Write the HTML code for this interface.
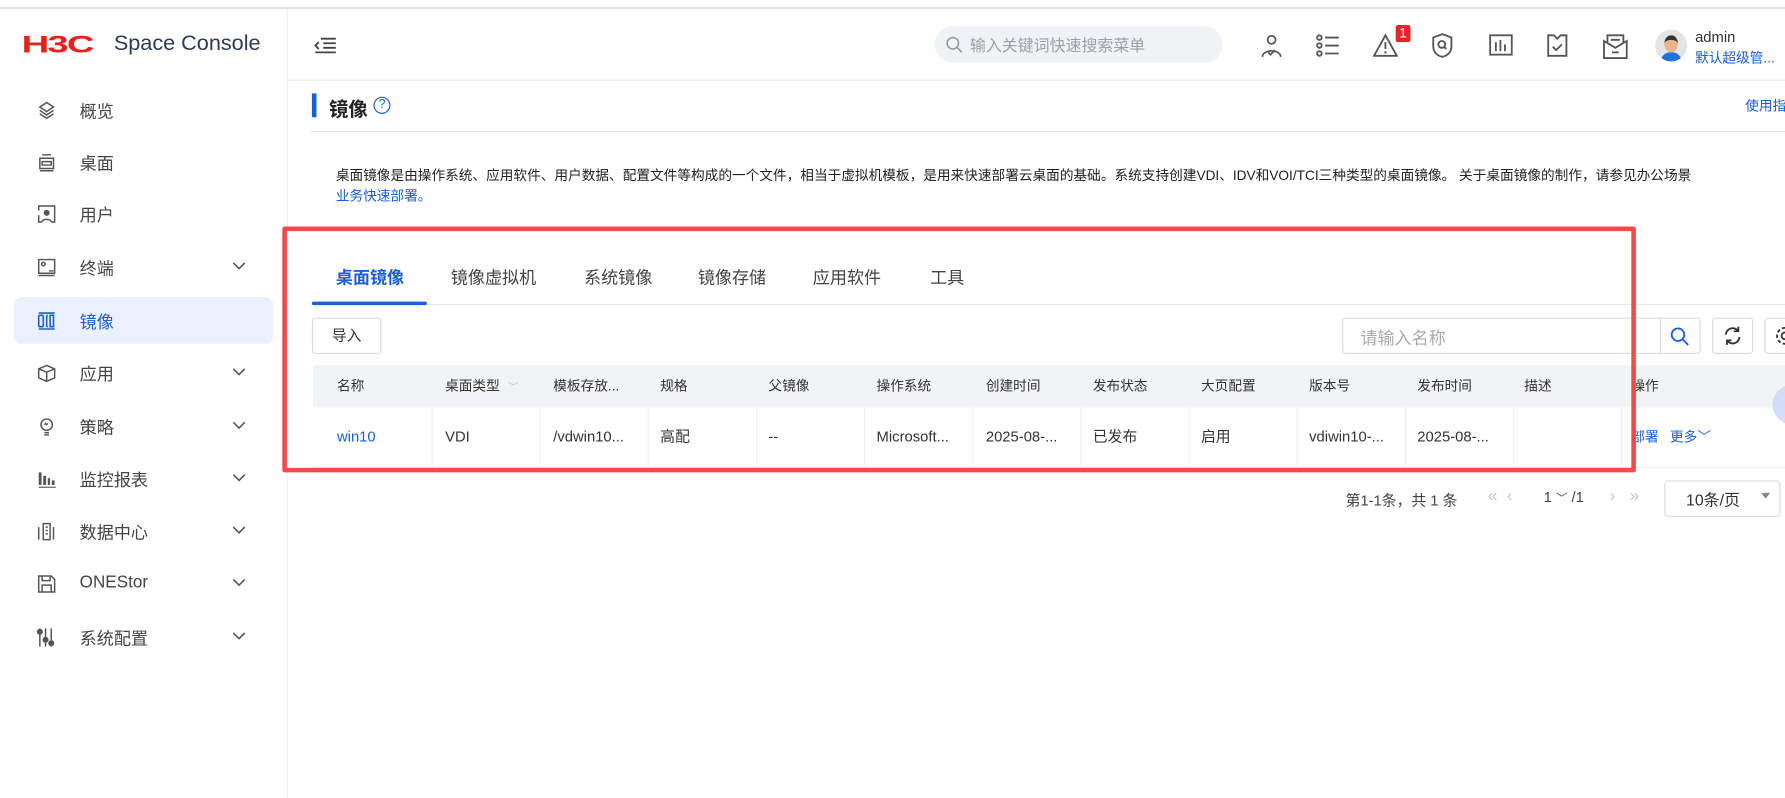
<!DOCTYPE html>
<html><head><meta charset="utf-8">
<style>
*{box-sizing:border-box;margin:0;padding:0}
html,body{width:1785px;height:798px;overflow:hidden;background:#fff}
#w{position:absolute;left:0;top:0;width:1568px;height:701px;transform:scale(1.13839);transform-origin:0 0;font-family:"Liberation Sans","Noto Sans CJK SC",sans-serif;color:#333;font-size:13px}
.a{position:absolute;white-space:nowrap}
.mi{position:absolute;left:0;width:252px;height:42px}
.mi .t{position:absolute;left:70px;top:11px;font-size:15px;color:#444}
.mi svg.ic{position:absolute;left:32px;top:12px}
.mi .ch{position:absolute;left:204px;top:16px}
.th{position:absolute;top:321px;height:37px;line-height:37px;font-size:12px;color:#333}
.td{position:absolute;top:358px;height:52px;line-height:52px;font-size:13px;color:#333;border-right:1px solid #eef0f3}
.hi{position:absolute;top:29px}
</style></head><body><div id="w">
<div class="a" style="left:0;top:6px;width:1568px;height:2px;background:#e6e6e6"></div>
<!-- sidebar -->
<div class="a" style="left:252px;top:8px;width:1px;height:693px;background:#eceef2"></div>
<div class="a" style="left:19px;top:28px;font-size:21px;font-weight:bold;color:#e2231a;letter-spacing:-1px;font-family:'Liberation Sans',sans-serif;transform:scaleX(1.6);transform-origin:0 0">H3C</div>
<div class="a" style="left:100px;top:28px;font-size:19px;color:#2f3a4f">Space Console</div>
<div class="a" style="left:12px;top:261px;width:228px;height:41px;background:#eaf1fd;border-radius:7px"></div>

<div class="mi" style="top:76px"><svg class="ic" width="18" height="18" viewBox="0 0 18 18" fill="none" stroke="#555" stroke-width="1.3"><path d="M9 2l6 4-6 4-6-4z"/><path d="M3 9l6 4 6-4"/><path d="M3 12l6 4 6-4"/></svg><span class="t">概览</span></div>
<div class="mi" style="top:122px"><svg class="ic" width="18" height="18" viewBox="0 0 18 18" fill="none" stroke="#555" stroke-width="1.3"><path d="M5 2h8M3 5h12v9H3zM5 8h8v3H5zM3 16h12"/></svg><span class="t">桌面</span></div>
<div class="mi" style="top:167px"><svg class="ic" width="18" height="18" viewBox="0 0 18 18" fill="none" stroke="#555" stroke-width="1.3"><path d="M2 6V2h14v14h-3M2 10v6h3"/><circle cx="9" cy="8" r="2" fill="#555"/><path d="M5 16c0-3 8-3 8 0"/></svg><span class="t">用户</span></div>
<div class="mi" style="top:214px"><svg class="ic" width="18" height="18" viewBox="0 0 18 18" fill="none" stroke="#555" stroke-width="1.3"><path d="M2 2h14v12H2zM2 16h14"/><circle cx="6" cy="6" r="1.5"/><path d="M11 12h4"/></svg><span class="t">终端</span><svg class="ch" width="12" height="8" viewBox="0 0 12 8"><path d="M1 1l5 5 5-5" fill="none" stroke="#555" stroke-width="1.4"/></svg></div>
<div class="mi" style="top:261px"><svg class="ic" width="18" height="18" viewBox="0 0 18 18" fill="none" stroke="#1a5fd6" stroke-width="1.4"><path d="M2 2h14M2 16h14M2 4v10M6 4v10M2 4h4M2 14h4M9 4v10M12 4h3v10h-3zM9 4h1M9 14h1"/></svg><span class="t" style="color:#1a5fd6">镜像</span></div>
<div class="mi" style="top:307px"><svg class="ic" width="18" height="18" viewBox="0 0 18 18" fill="none" stroke="#555" stroke-width="1.3"><path d="M9 2l7 3v8l-7 3-7-3V5z"/><path d="M2 5l7 3 7-3M9 8v8"/></svg><span class="t">应用</span><svg class="ch" width="12" height="8" viewBox="0 0 12 8"><path d="M1 1l5 5 5-5" fill="none" stroke="#555" stroke-width="1.4"/></svg></div>
<div class="mi" style="top:354px"><svg class="ic" width="18" height="18" viewBox="0 0 18 18" fill="none" stroke="#555" stroke-width="1.3"><circle cx="9" cy="7" r="5"/><path d="M7 7l1-1 1 1 1-1M7 14h4M7 16h4"/></svg><span class="t">策略</span><svg class="ch" width="12" height="8" viewBox="0 0 12 8"><path d="M1 1l5 5 5-5" fill="none" stroke="#555" stroke-width="1.4"/></svg></div>
<div class="mi" style="top:400px"><svg class="ic" width="18" height="18" viewBox="0 0 18 18" fill="#555"><rect x="2" y="3" width="2.5" height="11"/><rect x="6" y="6" width="2.5" height="8"/><rect x="10" y="8" width="2" height="6"/><rect x="13.5" y="10" width="2.5" height="4"/><rect x="2" y="15.5" width="15" height="1"/></svg><span class="t">监控报表</span><svg class="ch" width="12" height="8" viewBox="0 0 12 8"><path d="M1 1l5 5 5-5" fill="none" stroke="#555" stroke-width="1.4"/></svg></div>
<div class="mi" style="top:446px"><svg class="ic" width="18" height="18" viewBox="0 0 18 18" fill="none" stroke="#555" stroke-width="1.3"><path d="M2 5v11M6 2h6v14H6zM15 5v11M8 5h2M8 8h2M8 11h2"/></svg><span class="t">数据中心</span><svg class="ch" width="12" height="8" viewBox="0 0 12 8"><path d="M1 1l5 5 5-5" fill="none" stroke="#555" stroke-width="1.4"/></svg></div>
<div class="mi" style="top:492px"><svg class="ic" width="18" height="18" viewBox="0 0 18 18" fill="none" stroke="#555" stroke-width="1.3"><path d="M2 2h11l3 3v11H2zM5 2v4h7V2M5 16v-6h8v6"/></svg><span class="t">ONEStor</span><svg class="ch" width="12" height="8" viewBox="0 0 12 8"><path d="M1 1l5 5 5-5" fill="none" stroke="#555" stroke-width="1.4"/></svg></div>
<div class="mi" style="top:539px"><svg class="ic" width="18" height="18" viewBox="0 0 18 18" fill="none" stroke="#555" stroke-width="1.3"><path d="M3 1v16M8 1v16M13 1v16"/><circle cx="3" cy="4" r="2" fill="#555"/><circle cx="8" cy="11" r="2" fill="#555"/><circle cx="13" cy="14" r="2" fill="#555"/></svg><span class="t">系统配置</span><svg class="ch" width="12" height="8" viewBox="0 0 12 8"><path d="M1 1l5 5 5-5" fill="none" stroke="#555" stroke-width="1.4"/></svg></div>

<!-- header -->
<div class="a" style="left:253px;top:70px;width:1315px;height:1px;background:#eceef2"></div>
<svg class="a" style="left:276px;top:31px" width="20" height="18" viewBox="0 0 20 18" fill="none" stroke="#444" stroke-width="1.6"><path d="M6 3h13M8 7h11M8 11h11M1 15h18M4 6l-3 3 3 3"/></svg>
<div class="a" style="left:821px;top:23px;width:253px;height:32px;background:#f0f2f5;border-radius:16px"></div>
<svg class="a" style="left:831px;top:32px" width="15" height="15" viewBox="0 0 15 15" fill="none" stroke="#999" stroke-width="1.4"><circle cx="6" cy="6" r="5"/><path d="M10 10l4 4"/></svg>
<div class="a" style="left:852px;top:30px;font-size:14px;color:#9aa0a8">输入关键词快速搜索菜单</div>
<svg class="hi" style="left:1106px" width="22" height="22" viewBox="0 0 22 22" fill="none" stroke="#555" stroke-width="1.5"><circle cx="11" cy="6" r="3.5"/><path d="M3 21c0-7 16-7 16 0"/><path d="M8 17l2 2 4-4"/></svg>
<svg class="hi" style="left:1156px" width="22" height="22" viewBox="0 0 22 22" fill="none" stroke="#555" stroke-width="1.6"><circle cx="3" cy="4" r="2"/><circle cx="3" cy="11" r="2"/><circle cx="3" cy="18" r="2"/><path d="M8 4h12M8 11h12M8 18h12"/></svg>
<svg class="hi" style="left:1206px" width="22" height="22" viewBox="0 0 22 22" fill="none" stroke="#555" stroke-width="1.6"><path d="M11 2L1 20h20z"/><path d="M11 8v6M11 16v2"/></svg>
<div class="a" style="left:1226px;top:22px;width:13px;height:15px;background:#e8232b;color:#fff;font-size:12px;line-height:15px;text-align:center;border-radius:2px">1</div>
<svg class="hi" style="left:1257px" width="20" height="22" viewBox="0 0 20 22" fill="none" stroke="#555" stroke-width="1.6"><path d="M10 1l8 3v8c0 5-4 8-8 9-4-1-8-4-8-9V4z"/><circle cx="9.5" cy="10" r="3"/><path d="M11.5 12l2 2"/></svg>
<svg class="hi" style="left:1308px" width="21" height="21" viewBox="0 0 21 21" fill="none" stroke="#555" stroke-width="1.6"><rect x="1" y="2" width="19" height="17"/><path d="M6 8v8M10 6v10M14 10v6"/></svg>
<svg class="hi" style="left:1358px" width="20" height="22" viewBox="0 0 20 22" fill="none" stroke="#555" stroke-width="1.6"><path d="M2 2h5l3 3 3-3h5v18H2z"/><path d="M6 12l3 3 5-5"/></svg>
<svg class="hi" style="left:1408px" width="22" height="24" viewBox="0 0 22 24" fill="none" stroke="#555" stroke-width="1.6"><path d="M4 9V2h14v7M1 7l10 6 10-6v15H1z"/><path d="M7 6h8M8 17h6"/></svg>
<div class="a" style="left:1454px;top:26px;width:28px;height:28px;border-radius:50%;background:#e4e4e4;overflow:hidden"><div style="position:absolute;left:8px;top:5px;width:12px;height:15px;border-radius:50%;background:#e8b58c;border-top:4px solid #333"></div><div style="position:absolute;left:5px;top:20px;width:18px;height:10px;border-radius:8px 8px 0 0;background:#1e73d6"></div></div>
<div class="a" style="left:1489px;top:25px;font-size:13px;color:#333">admin</div>
<div class="a" style="left:1489px;top:42px;font-size:12px;color:#1a5fd6">默认超级管...</div>

<!-- page title -->
<div class="a" style="left:274px;top:82px;width:4px;height:21px;background:#1a5fd6"></div>
<div class="a" style="left:289px;top:82px;font-size:17px;font-weight:bold;color:#222">镜像</div>
<div class="a" style="left:328px;top:85px;width:15px;height:15px;border:1.3px solid #1a5fd6;border-radius:50%;color:#1a5fd6;font-size:11px;line-height:13px;text-align:center">?</div>
<div class="a" style="left:1533px;top:84px;font-size:12px;color:#1a5fd6">使用指南</div>
<div class="a" style="left:273px;top:115px;width:1295px;height:1px;background:#e8e8e8"></div>
<div class="a" style="left:295px;top:145px;font-size:12px;color:#222">桌面镜像是由操作系统、应用软件、用户数据、配置文件等构成的一个文件，相当于虚拟机模板，是用来快速部署云桌面的基础。系统支持创建VDI、IDV和VOI/TCI三种类型的桌面镜像。 关于桌面镜像的制作，请参见办公场景</div>
<div class="a" style="left:295px;top:163px;font-size:12px;color:#1a5fd6">业务快速部署。</div>

<!-- tabs -->
<div class="a" style="left:295px;top:233px;font-size:15px;font-weight:bold;color:#1a5fd6">桌面镜像</div>
<div class="a" style="left:396px;top:233px;font-size:15px;color:#444">镜像虚拟机</div>
<div class="a" style="left:513px;top:233px;font-size:15px;color:#444">系统镜像</div>
<div class="a" style="left:613px;top:233px;font-size:15px;color:#444">镜像存储</div>
<div class="a" style="left:714px;top:233px;font-size:15px;color:#444">应用软件</div>
<div class="a" style="left:817px;top:233px;font-size:15px;color:#444">工具</div>
<div class="a" style="left:274px;top:267px;width:1294px;height:1px;background:#e8e8e8"></div>
<div class="a" style="left:274px;top:265px;width:101px;height:3px;background:#1a5fd6;border-radius:2px"></div>

<div class="a" style="left:274px;top:279px;width:61px;height:32px;border:1px solid #d8dbe0;border-radius:3px;text-align:center;line-height:30px;font-size:13px">导入</div>
<div class="a" style="left:1179px;top:279px;width:315px;height:32px;border:1px solid #d8dbe0;border-radius:3px"></div>
<div class="a" style="left:1458px;top:279px;width:1px;height:32px;background:#d8dbe0"></div>
<div class="a" style="left:1195px;top:286px;font-size:15px;color:#aaa">请输入名称</div>
<svg class="a" style="left:1467px;top:287px" width="17" height="17" viewBox="0 0 17 17" fill="none" stroke="#1a5fd6" stroke-width="1.6"><circle cx="7" cy="7" r="5.5"/><path d="M11 11l5 5"/></svg>
<div class="a" style="left:1504px;top:279px;width:36px;height:32px;border:1px solid #d8dbe0;border-radius:3px"></div>
<svg class="a" style="left:1513px;top:286px" width="18" height="18" viewBox="0 0 18 18" fill="none" stroke="#333" stroke-width="1.6"><path d="M3 8a6 6 0 0 1 11-3M15 10a6 6 0 0 1-11 3"/><path d="M14 1v4h-4M4 17v-4h4"/></svg>
<div class="a" style="left:1550px;top:279px;width:30px;height:32px;border:1px solid #d8dbe0;border-radius:3px"></div>
<svg class="a" style="left:1559px;top:286px" width="18" height="18" viewBox="0 0 18 18" fill="none" stroke="#333" stroke-width="1.6"><circle cx="9" cy="9" r="3"/><circle cx="9" cy="9" r="7" stroke-dasharray="3 2"/></svg>

<!-- table -->
<div class="a" style="left:275px;top:321px;width:1293px;height:37px;background:#f2f3f5"></div>
<div class="a" style="left:275px;top:410px;width:1293px;height:1px;background:#eceef2"></div>
<div class="th" style="left:296px">名称</div>
<div class="th" style="left:391px">桌面类型 <span style="color:#bbb;font-size:9px;margin-left:4px">﹀</span></div>
<div class="th" style="left:486px">模板存放...</div>
<div class="th" style="left:580px">规格</div>
<div class="th" style="left:675px">父镜像</div>
<div class="th" style="left:770px">操作系统</div>
<div class="th" style="left:866px">创建时间</div>
<div class="th" style="left:960px">发布状态</div>
<div class="th" style="left:1055px">大页配置</div>
<div class="th" style="left:1150px">版本号</div>
<div class="th" style="left:1245px">发布时间</div>
<div class="th" style="left:1339px">描述</div>
<div class="th" style="left:1433px">操作</div>
<div class="td" style="left:275px;width:105px;padding-left:21px;color:#1a5fd6">win10</div>
<div class="td" style="left:380px;width:95px;padding-left:11px">VDI</div>
<div class="td" style="left:475px;width:95px;padding-left:11px">/vdwin10...</div>
<div class="td" style="left:570px;width:95px;padding-left:10px">高配</div>
<div class="td" style="left:665px;width:95px;padding-left:10px">--</div>
<div class="td" style="left:760px;width:95px;padding-left:10px">Microsoft...</div>
<div class="td" style="left:855px;width:95px;padding-left:11px">2025-08-...</div>
<div class="td" style="left:950px;width:95px;padding-left:10px">已发布</div>
<div class="td" style="left:1045px;width:95px;padding-left:10px">启用</div>
<div class="td" style="left:1140px;width:95px;padding-left:10px">vdiwin10-...</div>
<div class="td" style="left:1235px;width:95px;padding-left:10px">2025-08-...</div>
<div class="td" style="left:1330px;width:95px"></div>
<div class="td" style="left:1433px;border:none;color:#1a5fd6;font-size:12px">部署 &nbsp; 更多﹀</div>
<div class="a" style="left:1557px;top:337px;width:40px;height:37px;border-radius:50%;background:#c9d6f7;opacity:.8"></div>

<!-- red box -->
<div class="a" style="left:248px;top:199px;width:1189px;height:216px;border:4px solid #f5474c;border-radius:2px"></div>

<!-- pagination -->
<div class="a" style="left:1182px;top:429px;font-size:13px;color:#444">第1-1条，共 1 条</div>
<div class="a" style="left:1307px;top:427px;font-size:15px;color:#c3c6cc">«&nbsp; ‹</div>
<div class="a" style="left:1356px;top:429px;font-size:13px;color:#444">1 <span style="font-size:10px">﹀</span> /1</div>
<div class="a" style="left:1414px;top:427px;font-size:15px;color:#c3c6cc">› &nbsp; »</div>
<div class="a" style="left:1462px;top:422px;width:102px;height:32px;border:1px solid #d8dbe0;border-radius:3px"></div>
<div class="a" style="left:1481px;top:429px;font-size:14px;color:#333">10条/页</div>
<div class="a" style="left:1547px;top:433px;width:0;height:0;border-left:4px solid transparent;border-right:4px solid transparent;border-top:5px solid #888"></div>
</div></body></html>
